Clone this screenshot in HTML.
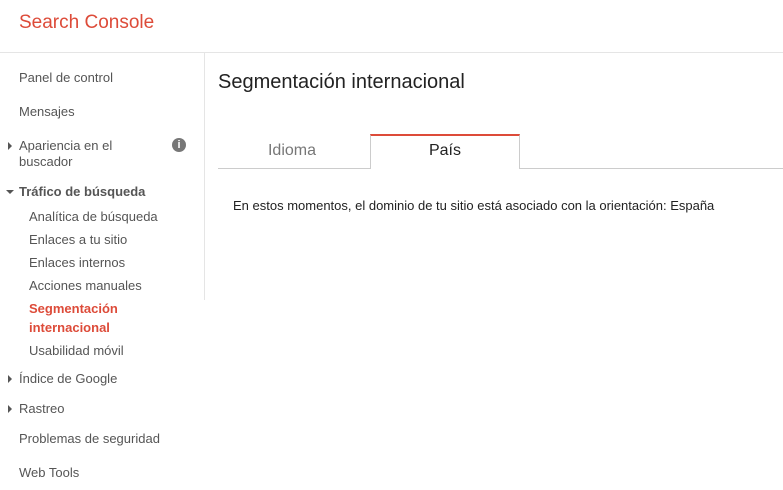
<!DOCTYPE html>
<html><head><meta charset="utf-8"><style>
body{margin:0;width:783px;height:490px;background:#fff;font-family:"Liberation Sans",Arial,sans-serif;position:relative;overflow:hidden}
.a{position:absolute;white-space:nowrap;line-height:16px}
.s{font-size:13px;color:#555}
.b{font-weight:bold}
.tri{position:absolute;width:0;height:0}
</style></head><body>
<div class="a" style="left:19px;top:12px;font-size:19px;line-height:22px;color:#dd4b39">Search Console</div>
<div style="position:absolute;left:0;top:52px;width:783px;height:1px;background:#e5e5e5"></div>
<div style="position:absolute;left:204px;top:53px;width:1px;height:247px;background:#e5e5e5"></div>

<div class="a s" style="left:19px;top:70px">Panel de control</div>
<div class="a s" style="left:19px;top:104px">Mensajes</div>
<div class="tri" style="left:8px;top:142px;border-left:4px solid #555;border-top:4px solid transparent;border-bottom:4px solid transparent"></div>
<div class="a s" style="left:19px;top:138px">Apariencia en el</div>
<div class="a s" style="left:19px;top:154px">buscador</div>
<div style="position:absolute;left:172px;top:138px;width:14px;height:14px;border-radius:50%;background:#777;color:#fff;font-size:11px;font-weight:bold;text-align:center;line-height:14px">i</div>
<div class="tri" style="left:6px;top:190px;border-top:4px solid #555;border-left:4px solid transparent;border-right:4px solid transparent"></div>
<div class="a s b" style="left:19px;top:184px">Tráfico de búsqueda</div>
<div class="a s" style="left:29px;top:209px">Analítica de búsqueda</div>
<div class="a s" style="left:29px;top:232px">Enlaces a tu sitio</div>
<div class="a s" style="left:29px;top:255px">Enlaces internos</div>
<div class="a s" style="left:29px;top:278px">Acciones manuales</div>
<div class="a s b" style="left:29px;top:301px;color:#dd4b39">Segmentación</div>
<div class="a s b" style="left:29px;top:320px;color:#dd4b39">internacional</div>
<div class="a s" style="left:29px;top:343px">Usabilidad móvil</div>
<div class="tri" style="left:8px;top:375px;border-left:4px solid #555;border-top:4px solid transparent;border-bottom:4px solid transparent"></div>
<div class="a s" style="left:19px;top:371px">Índice de Google</div>
<div class="tri" style="left:8px;top:405px;border-left:4px solid #555;border-top:4px solid transparent;border-bottom:4px solid transparent"></div>
<div class="a s" style="left:19px;top:401px">Rastreo</div>
<div class="a s" style="left:19px;top:431px">Problemas de seguridad</div>
<div class="a s" style="left:19px;top:465px">Web Tools</div>

<div class="a" style="left:218px;top:71px;font-size:20px;line-height:22px;color:#222">Segmentación internacional</div>

<div style="position:absolute;left:218px;top:168px;width:565px;height:1px;background:#ccc"></div>
<div class="a" style="left:216px;top:142px;width:152px;text-align:center;font-size:16px;line-height:18px;color:#777">Idioma</div>
<div style="position:absolute;left:370px;top:134px;width:148px;height:35px;background:#fff;border-left:1px solid #ccc;border-right:1px solid #ccc;border-top:2px solid #dd4b39;box-sizing:border-box;width:150px"></div>
<div class="a" style="left:370px;top:142px;width:150px;text-align:center;font-size:16px;line-height:18px;color:#222">País</div>

<div class="a" style="left:233px;top:198px;font-size:13px;color:#222">En estos momentos, el dominio de tu sitio está asociado con la orientación: España</div>
</body></html>
